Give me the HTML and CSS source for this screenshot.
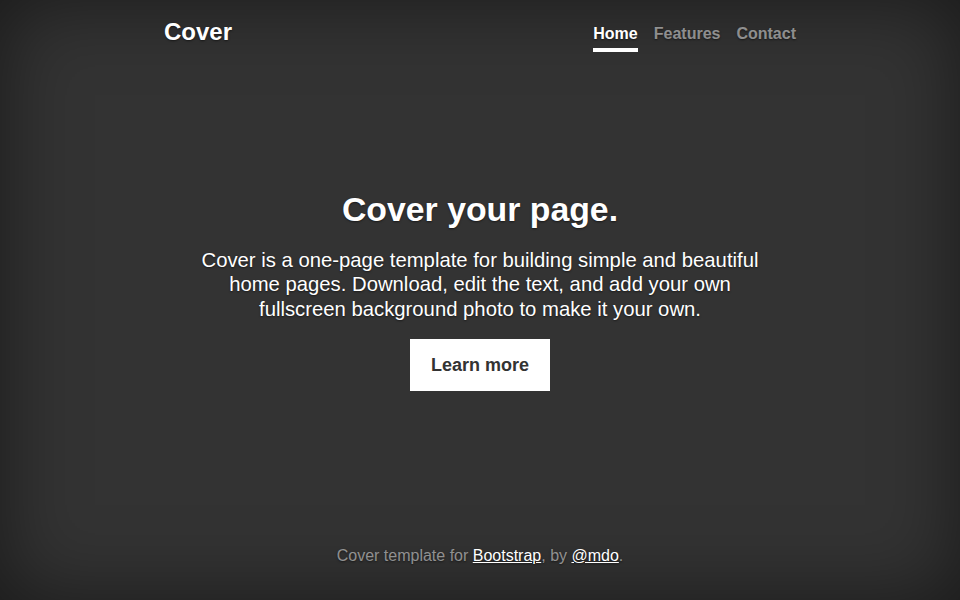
FILE: index.html
```html
<!DOCTYPE html>
<html lang="en">
<head>
<meta charset="utf-8">
<title>Cover Template</title>
<link rel="stylesheet" href="styles.css">
</head>
<body>
<div class="cover">
  <header class="masthead">
    <h3 class="brand">Cover</h3>
    <nav class="nav">
      <a class="nav-link active" href="#">Home</a>
      <a class="nav-link" href="#">Features</a>
      <a class="nav-link" href="#">Contact</a>
    </nav>
  </header>
  <main class="hero">
    <h1 class="hero-title">Cover your page.</h1>
    <p class="lead">Cover is a one-page template for building simple and beautiful home pages. Download, edit the text, and add your own fullscreen background photo to make it your own.</p>
    <p class="lead-action"><a href="#" class="btn">Learn more</a></p>
  </main>
  <footer class="mastfoot">
    <p>Cover template for <a href="#">Bootstrap</a>, by <a href="#">@mdo</a>.</p>
  </footer>
</div>
</body>
</html>
```
FILE: styles.css
```css
html, body {
  height: 100%;
}
body {
  margin: 0;
  background: #333;
  color: #fff;
  font-family: "Liberation Sans", Arial, sans-serif;
  font-size: 16px;
  line-height: 1.5;
  text-shadow: 0 1px 2px rgba(0, 0, 0, .5);
  box-shadow: inset 0 0 80px rgba(0, 0, 0, .5);
  display: flex;
}
.cover {
  box-sizing: border-box;
  width: 100%;
  max-width: 672px;
  height: 100vh;
  margin: 0 auto;
  padding: 16px 20px;
  display: flex;
  flex-direction: column;
}
.masthead {
  display: flex;
  justify-content: space-between;
  align-items: flex-start;
  margin-bottom: auto;
}
.brand {
  margin: 2px 0 4px;
  font-size: 24px;
  font-weight: 700;
  line-height: 1.2;
}
.nav {
  display: flex;
  margin-top: 4px;
}
.nav-link {
  margin-left: 16px;
  padding: 4px 0;
  line-height: 20px;
  font-weight: 700;
  color: rgba(255, 255, 255, .5);
  text-decoration: none;
  border-bottom: 4px solid transparent;
}
.nav-link.active {
  color: #fff;
  border-bottom-color: #fff;
}
.hero {
  text-align: center;
  padding: 0 24px;
}
.hero-title {
  margin: 0 0 18px;
  font-size: 33.8px;
  font-weight: 700;
  line-height: 1.2;
}
.lead {
  margin: 0 0 18px;
  font-size: 20.3px;
  line-height: 24.5px;
}
.lead-action {
  margin: 0 0 16px;
}
.btn {
  display: inline-block;
  padding: 12px 20px;
  font-size: 18px;
  line-height: 26px;
  font-weight: 700;
  color: #333;
  background: #fff;
  border: 1px solid #fff;
  text-decoration: none;
  text-shadow: none;
}
.mastfoot {
  margin-top: auto;
  text-align: center;
  color: rgba(255, 255, 255, .5);
}
.mastfoot p {
  margin: 0 0 16px;
}
.mastfoot a {
  color: #fff;
}
```
